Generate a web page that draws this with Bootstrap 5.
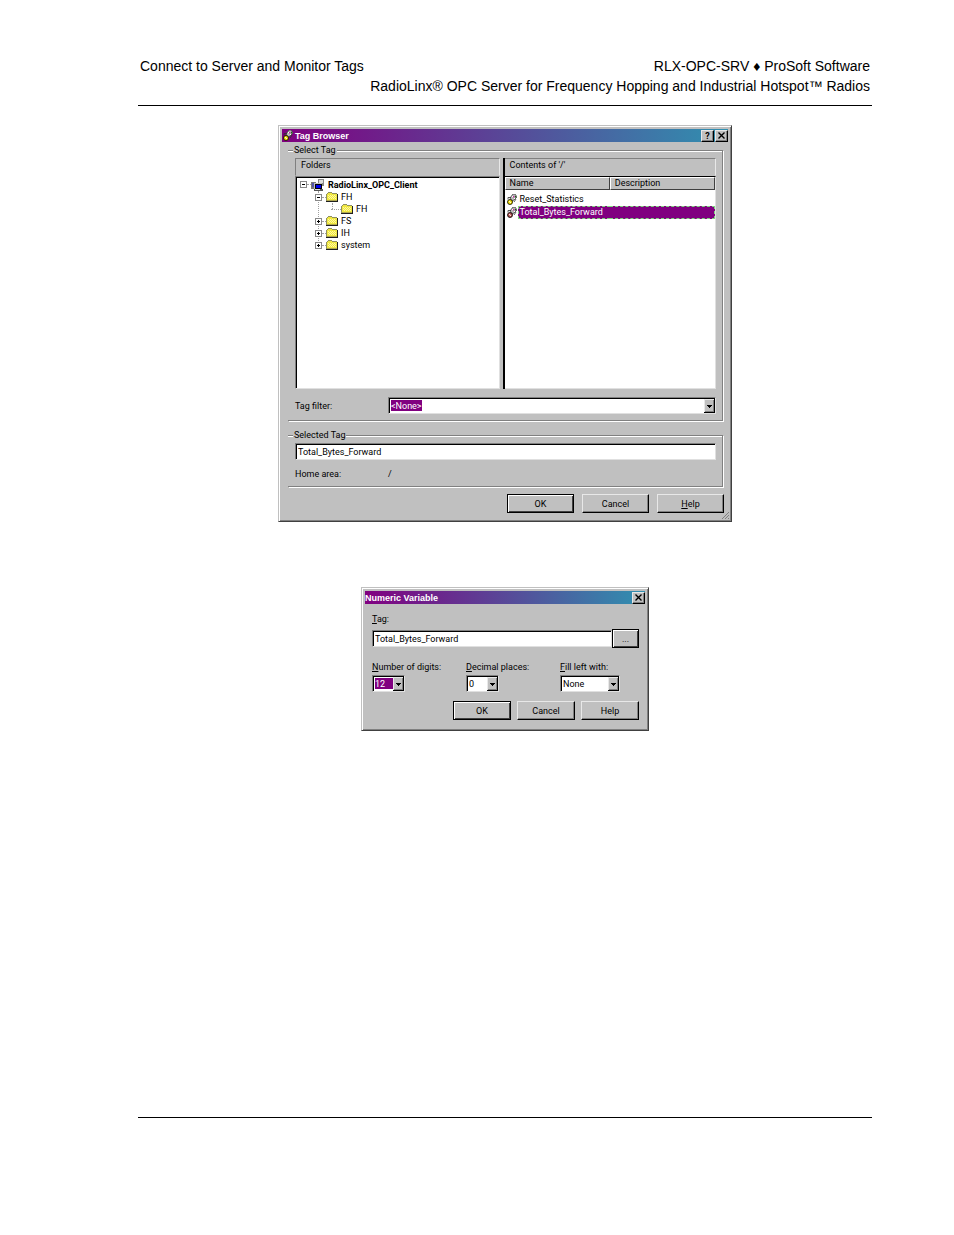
<!DOCTYPE html>
<html lang="en">
<head>
<meta charset="utf-8">
<meta name="viewport" content="width=device-width, initial-scale=1">
<title>Connect to Server and Monitor Tags</title>
<link href="https://cdn.jsdelivr.net/npm/bootstrap@5.3.0/dist/css/bootstrap.min.css" rel="stylesheet">
<style>
  body { background: #fff; color: #000; font-family: "Liberation Sans", sans-serif; }
  .sheet { padding: 56px 82px 0 138px; }
  .sheet-head { font-size: 14px; line-height: 20px; padding: 0 2px 9px; border-bottom: 1px solid #000; }
  .sheet-foot { height: 118px; border-top: 1px solid #000; }

  .dlg { width: 100%; background: #c0c0c0; border: 1px solid; border-color: #c0c0c0 #404040 #404040 #c0c0c0;
         box-shadow: inset 1px 1px #fff, inset -1px -1px #808080; padding: 3px;
         font-family: Roboto, "Liberation Sans", sans-serif; font-size: 9px; line-height: 12px; }
  .dlg-browser { max-width: 454px; margin-top: 19px; }
  .dlg-numeric { max-width: 288px; margin-top: 65px; }
  .dlg-title { height: 13px; background: linear-gradient(90deg, #800080, #3090b0); color: #fff; gap: 1px; }
  .dlg-title h2 { font: bold 9px/12px "Liberation Sans", sans-serif; margin: 0; }
  .dlg-title > svg { margin: 0 1px; }

  .face { background: #c0c0c0; color: #000; border: 1px solid; border-color: #e8e8e8 #000 #000 #e8e8e8;
          box-shadow: inset -1px -1px #808080; padding: 0; font: inherit; line-height: 12px; text-align: center; }
  .face-default { border-color: #000; box-shadow: inset 1px 1px #fff, inset -1px -1px #404040; }
  .caption-btn { width: 13px; height: 12px; display: flex; align-items: center; justify-content: center; }
  .push { height: 19px; }
  .push-wide { width: 67px; }
  .push-mid { width: 58px; }
  .push-dots { width: 27px; }

  .sunk { background-color: #fff; color: #000; border: 1px solid; border-color: #808080 #e0e0e0 #e0e0e0 #808080;
          box-shadow: inset 1px 1px #000; border-radius: 0; font: inherit; }
  input.sunk { height: 17px; padding: 0 2px; }
  select.sunk { height: 17px; padding: 0 14px 0 2px; appearance: none; background-repeat: no-repeat;
    background-position: right 0 top 1px;
    background-image: url("data:image/svg+xml,%3Csvg xmlns='http://www.w3.org/2000/svg' width='11' height='14' shape-rendering='crispEdges'%3E%3Cpath fill='%23000' d='M0 0h11v14H0z'/%3E%3Cpath fill='%23e8e8e8' d='M0 0h10v13H0z'/%3E%3Cpath fill='%23808080' d='M1 1h9v12H1z'/%3E%3Cpath fill='%23c0c0c0' d='M1 1h8v11H1z'/%3E%3Cpath fill='%23000' d='M3 6h5v1H3zM4 7h3v1H4zM5 8h1v1H5z'/%3E%3C/svg%3E"); }
  select.picked { color: #fff; background-position: right 0 top 1px, 2px 2px;
    background-image: url("data:image/svg+xml,%3Csvg xmlns='http://www.w3.org/2000/svg' width='11' height='14' shape-rendering='crispEdges'%3E%3Cpath fill='%23000' d='M0 0h11v14H0z'/%3E%3Cpath fill='%23e8e8e8' d='M0 0h10v13H0z'/%3E%3Cpath fill='%23808080' d='M1 1h9v12H1z'/%3E%3Cpath fill='%23c0c0c0' d='M1 1h8v11H1z'/%3E%3Cpath fill='%23000' d='M3 6h5v1H3zM4 7h3v1H4zM5 8h1v1H5z'/%3E%3C/svg%3E"), linear-gradient(#800080, #800080); }
  #filter { background-size: auto, 31px 11px; }
  #digits { background-size: auto, 18px 11px; }
  #digits, #places { width: 33px; }
  #fill { width: 60px; }

  .etched { min-width: 0; border: 1px solid #808080; border-left: 0; box-shadow: 1px 1px #fff, inset 0 1px #fff; margin: 0 5px 0 6px; padding: 0 6px 6px 7px; }
  .etched legend { float: none; width: auto; margin: 0 0 0 -2px; padding: 0 1px; font-size: 9px; line-height: 12px; background: #c0c0c0; }
  .etched-tree { margin-top: 2px; }
  .panes { gap: 3px; padding-top: 2px; }

  .pane-left { flex: 206 1 0; min-width: 0; }
  .pane-right { flex: 213 1 0; min-width: 0; border-left: 2px solid #000; }
  .pane-head { height: 18px; padding: 0 5px; line-height: 12px; border: 1px solid; border-color: #808080 #e8e8e8 #c0c0c0 #808080; }
  .pane-body { height: 213px; background: #fff; border: 1px solid; border-color: #808080 #e0e0e0 #e0e0e0 #808080; }
  .pane-left .pane-body { box-shadow: inset 1px 1px #000; }
  .pane-right .pane-body, .pane-right .pane-head { border-left: 0; }
  .pane-right .pane-body { border-top-color: #000; }

  .tree, .tree ul { list-style: none; margin: 0; padding: 0; position: relative; }
  .tree { padding: 1px 0 0 4px; }
  .tree ul { padding-left: 15px; }
  .tree ul::before { content: ""; position: absolute; left: 18px; top: 0; bottom: 6px; border-left: 1px dotted #a0a0a0; }
  .tree ul ul::before { left: 17px; }
  .node { display: flex; align-items: center; height: 12px; position: relative; }
  .tree > li > .node { height: 13px; font-weight: bold; }
  .node > svg { margin-right: 3px; flex: none; }
  .twisty { width: 7px; height: 7px; padding: 0; border: 0; background: none; display: flex; flex: none; }
  .stub { width: 4px; border-top: 1px dotted #a0a0a0; flex: none; }
  .leaf-stub { width: 10px; margin-left: 1px; }

  .tags { width: 100%; border-collapse: separate; border-spacing: 0; table-layout: fixed; line-height: 12px; }
  .tags th { height: 13px; padding: 0 4px; font-weight: normal; line-height: 11px; background: #c0c0c0; border: 1px solid; border-color: #fff #404040 #404040 #fff; }
  .tags td { padding: 0; height: 13px; }
  .tags tbody tr:first-child td { height: 16px; padding-top: 3px; }
  .tag-cell { display: flex; height: 13px; align-items: center; }
  .tag-cell svg { flex: none; margin: 0 1px 0 2px; }
  .tag-cell span { flex: 1; height: 13px; line-height: 12px; padding-left: 2px; }
  .chosen .tag-cell span { background: #800080; color: #fff; border: 1px dashed #7fd87f; border-right: 0; padding-left: 1px; line-height: 11px; }
  .chosen td + td { background: #800080; border: 1px dashed #7fd87f; border-left: 0; }
  .w-label { width: 93px; }
  .home-row { padding-top: 8px; }
  .dlg-actions { gap: 8px; padding: 7px 4px 5px; }
  .grip { position: absolute; right: 2px; bottom: 2px; }

  .numeric-body { padding: 9px 6px 7px 7px; }
  .numeric-fields { display: grid; grid-template-columns: 94px 94px auto; padding: 13px 0 9px; }
  .numeric-fields label { margin-bottom: 2px; }
  .numeric-actions { gap: 6px; }
</style>
</head>
<body>
<svg width="0" height="0" class="d-none" aria-hidden="true">
  <symbol id="tag" viewBox="0 0 10 11">
    <path d="M3 4L6 0H8L10 3L7 6L5 7Z" fill="#b8b8b8" stroke="#404040" stroke-width=".8"/>
    <path d="M5 2h1v1H5zM7 4h1v1H7z" fill="#fff"/>
    <path d="M6 2h1.500v1.500H6z" fill="#c030a0"/><path d="M8 2h1v1.500H8z" fill="#107010"/>
    <circle cx="3" cy="8" r="2.500" fill="currentColor" stroke="#000" stroke-width=".8"/>
    <path d="M2 7.500h1v1h1" stroke="#fff" stroke-width=".8" fill="none"/>
    <path d="M1 5.500V3.500H4M7 8L9 5" stroke="#303030" stroke-width=".8" fill="none"/>
  </symbol>
  <symbol id="folder" viewBox="0 0 12 10" shape-rendering="crispEdges">
    <path d="M1 2h1V1h4v1h5v7H1z" fill="#f0e840"/>
    <path d="M2 3h1v1H2zM4 3h1v1H4zM6 3h1v1H6zM8 3h1v1H8zM3 4h1v1H3zM5 4h1v1H5zM7 4h1v1H7zM9 4h1v1H9zM2 5h1v1H2zM4 5h1v1H4zM6 5h1v1H6zM8 5h1v1H8zM3 6h1v1H3zM5 6h1v1H5zM7 6h1v1H7zM9 6h1v1H9z" fill="#fff8a0"/>
    <path d="M0 2h1v7H0zM1 1h1v1H1zM2 0h4v1H2zM6 1h5v1H6z" fill="#909060"/>
    <path d="M0 9h12v1H0zM11 2h1v8h-1z" fill="#202020"/><path d="M1 8h10v1H1z" fill="#b0a850"/>
  </symbol>
  <symbol id="plus" viewBox="0 0 7 7" shape-rendering="crispEdges">
    <path d="M0 0h7v7H0z" fill="#888"/><path d="M1 1h5v5H1z" fill="#fff"/><path d="M2 3h3v1H2zM3 2h1v3H3z"/>
  </symbol>
  <symbol id="minus" viewBox="0 0 7 7" shape-rendering="crispEdges">
    <path d="M0 0h7v7H0z" fill="#888"/><path d="M1 1h5v5H1z" fill="#fff"/><path d="M2 3h3v1H2z"/>
  </symbol>
  <symbol id="cross" viewBox="0 0 7 7"><path d="M.5.5l6 6M6.500.5l-6 6" stroke="#000" stroke-width="1.400"/></symbol>
</svg>

<div class="sheet min-vh-100 d-flex flex-column">
  <header class="sheet-head">
    <div class="d-flex justify-content-between"><span>Connect to Server and Monitor Tags</span><span>RLX-OPC-SRV ♦ ProSoft Software</span></div>
    <div class="text-end">RadioLinx® OPC Server for Frequency Hopping and Industrial Hotspot™ Radios</div>
  </header>

  <main class="d-flex flex-column align-items-center">
    <section class="dlg dlg-browser position-relative" aria-labelledby="t1">
      <div class="dlg-title d-flex align-items-center">
        <svg width="10" height="11" color="#f0e000"><use href="#tag"/></svg>
        <h2 id="t1" class="flex-grow-1">Tag Browser</h2>
        <button class="face caption-btn fw-bold" type="button">?</button>
        <button class="face caption-btn" type="button" aria-label="Close"><svg width="7" height="7"><use href="#cross"/></svg></button>
      </div>

      <fieldset class="etched etched-tree">
        <legend>Select Tag</legend>
        <div class="panes d-flex">
          <div class="pane-left">
            <div class="pane-head">Folders</div>
            <div class="pane-body">
              <ul class="tree">
                <li>
                  <div class="node"><button class="twisty" type="button" aria-label="Collapse"><svg width="7" height="7"><use href="#minus"/></svg></button><span class="stub"></span>
                    <svg width="14" height="12" viewBox="0 0 14 12" shape-rendering="crispEdges"><path d="M7 0h6v7H7z" fill="#888"/><path d="M8 1h4v3H8z" fill="#ddd"/><path d="M0 3h5v7H0z" fill="#777"/><path d="M1 4h2v4H1z" fill="#55a"/><path d="M3 4h8v6H3z" fill="#c0c0c0"/><path d="M4 5h7v5H4z" fill="#000"/><path d="M5 6h5v3H5z" fill="#00e"/><path d="M3 10h9v2H3z" fill="#555"/><path d="M4 10h5v1H4z" fill="#ddd"/></svg>RadioLinx_OPC_Client</div>
                  <ul>
                    <li>
                      <div class="node"><button class="twisty" type="button" aria-label="Collapse"><svg width="7" height="7"><use href="#minus"/></svg></button><span class="stub"></span><svg width="12" height="10"><use href="#folder"/></svg>FH</div>
                      <ul><li><div class="node"><span class="stub leaf-stub"></span><svg width="12" height="10"><use href="#folder"/></svg>FH</div></li></ul>
                    </li>
                    <li><div class="node"><button class="twisty" type="button" aria-label="Expand"><svg width="7" height="7"><use href="#plus"/></svg></button><span class="stub"></span><svg width="12" height="10"><use href="#folder"/></svg>FS</div></li>
                    <li><div class="node"><button class="twisty" type="button" aria-label="Expand"><svg width="7" height="7"><use href="#plus"/></svg></button><span class="stub"></span><svg width="12" height="10"><use href="#folder"/></svg>IH</div></li>
                    <li><div class="node"><button class="twisty" type="button" aria-label="Expand"><svg width="7" height="7"><use href="#plus"/></svg></button><span class="stub"></span><svg width="12" height="10"><use href="#folder"/></svg>system</div></li>
                  </ul>
                </li>
              </ul>
            </div>
          </div>
          <div class="pane-right">
            <div class="pane-head">Contents of '/'</div>
            <div class="pane-body">
              <table class="tags">
                <thead><tr><th scope="col">Name</th><th scope="col">Description</th></tr></thead>
                <tbody>
                  <tr><td><div class="tag-cell"><svg width="10" height="11" color="#f0e000"><use href="#tag"/></svg><span>Reset_Statistics</span></div></td><td></td></tr>
                  <tr class="chosen"><td><div class="tag-cell"><svg width="10" height="11" color="#b05050"><use href="#tag"/></svg><span>Total_Bytes_Forward</span></div></td><td></td></tr>
                </tbody>
              </table>
            </div>
          </div>
        </div>
        <div class="d-flex align-items-center pt-2">
          <label class="w-label" for="filter">Tag filter:</label>
          <select id="filter" class="sunk picked flex-grow-1"><option>&lt;None&gt;</option></select>
        </div>
      </fieldset>

      <fieldset class="etched mt-2">
        <legend>Selected Tag</legend>
        <div class="panes"><input class="sunk w-100 d-block" type="text" value="Total_Bytes_Forward" aria-label="Selected tag"></div>
        <div class="home-row d-flex"><span class="w-label">Home area:</span><span>/</span></div>
      </fieldset>

      <div class="dlg-actions d-flex justify-content-end">
        <button class="face face-default push push-wide" type="button">OK</button>
        <button class="face push push-wide" type="button">Cancel</button>
        <button class="face push push-wide" type="button"><u>H</u>elp</button>
      </div>
      <svg class="grip" width="7" height="7" viewBox="0 0 7 7"><path d="M0 7L7 0M3 7L7 3M6 7L7 6" stroke="#808080"/></svg>
    </section>

    <section class="dlg dlg-numeric" aria-labelledby="t2">
      <div class="dlg-title d-flex align-items-center">
        <h2 id="t2" class="flex-grow-1">Numeric Variable</h2>
        <button class="face caption-btn" type="button" aria-label="Close"><svg width="7" height="7"><use href="#cross"/></svg></button>
      </div>
      <div class="numeric-body">
        <label class="d-block" for="tagname"><u>T</u>ag:</label>
        <div class="d-flex align-items-center pt-1">
          <input id="tagname" class="sunk flex-grow-1" type="text" value="Total_Bytes_Forward">
          <button class="face face-default push push-dots" type="button">...</button>
        </div>
        <div class="numeric-fields">
          <div><label class="d-block" for="digits"><u>N</u>umber of digits:</label><select id="digits" class="sunk picked d-block"><option>12</option></select></div>
          <div><label class="d-block" for="places"><u>D</u>ecimal places:</label><select id="places" class="sunk d-block"><option>0</option></select></div>
          <div><label class="d-block" for="fill"><u>F</u>ill left with:</label><select id="fill" class="sunk d-block"><option>None</option></select></div>
        </div>
        <div class="numeric-actions d-flex justify-content-end">
          <button class="face face-default push push-mid" type="button">OK</button>
          <button class="face push push-mid" type="button">Cancel</button>
          <button class="face push push-mid" type="button">Help</button>
        </div>
      </div>
    </section>
  </main>

  <footer class="sheet-foot mt-auto"></footer>
</div>
<script src="https://cdn.jsdelivr.net/npm/bootstrap@5.3.0/dist/js/bootstrap.bundle.min.js"></script>
</body>
</html>
